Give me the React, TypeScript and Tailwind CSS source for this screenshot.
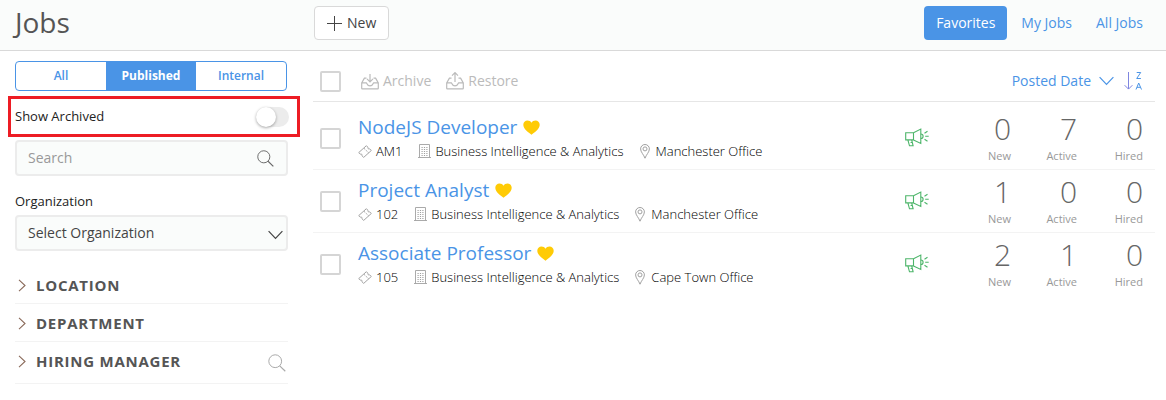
import React, { useState } from "react";

type Job = {
  title: string;
  code: string;
  department: string;
  office: string;
  stats: { label: string; value: number }[];
};

const makeStats = (fresh: number, active: number, hired: number) => [
  { label: "New", value: fresh },
  { label: "Active", value: active },
  { label: "Hired", value: hired },
];

const jobs: Job[] = [
  {
    title: "NodeJS Developer",
    code: "AM1",
    department: "Business Intelligence & Analytics",
    office: "Manchester Office",
    stats: makeStats(0, 7, 0),
  },
  {
    title: "Project Analyst",
    code: "102",
    department: "Business Intelligence & Analytics",
    office: "Manchester Office",
    stats: makeStats(1, 0, 0),
  },
  {
    title: "Associate Professor",
    code: "105",
    department: "Business Intelligence & Analytics",
    office: "Cape Town Office",
    stats: makeStats(2, 1, 0),
  },
];

type IconProps = { className?: string };

const PlusIcon = () => (
  <svg width="15" height="15" viewBox="0 0 15 15" fill="none" stroke="#444" aria-hidden="true">
    <path d="M0 7.5h15M7.5 0v15" />
  </svg>
);

const SearchIcon = ({ className }: IconProps) => (
  <svg viewBox="0 0 18 18" fill="none" stroke="currentColor" className={className} aria-hidden="true">
    <circle cx="7.2" cy="7.2" r="6.4" />
    <path d="M11.7 11.9l5.6 5.4" strokeWidth="1.2" />
  </svg>
);

const ChevronDown = ({ className }: IconProps) => (
  <svg width="15" height="10" viewBox="0 0 15 10" fill="none" stroke="currentColor" strokeWidth="1.2" className={className} aria-hidden="true">
    <path d="M.6 1.2l6.9 7.2 6.9-7.2" />
  </svg>
);

const ChevronRight = () => (
  <svg width="8" height="13" viewBox="0 0 8 13" fill="none" stroke="#8a6a5a" strokeWidth="1.1" aria-hidden="true">
    <path d="M1 .8l6 5.7-6 5.7" />
  </svg>
);

const Tray = () => (
  <path d="M5.5 6.2H3.4L.7 11v5.2c0 .4.3.7.7.7h15.200c.4 0 .7-.3.7-.7V11l-2.700-4.800h-2.100M.9 10.900h4.500c.5 0 .4 2.900 3.600 2.900s3.100-2.900 3.600-2.900h4.500" />
);

const ArchiveIcon = () => (
  <svg width="18" height="18" viewBox="0 0 18 18" fill="none" stroke="currentColor" strokeWidth="1.2" aria-hidden="true">
    <Tray />
    <path d="M9 2v7.500M6 6.800l3 3 3-3" />
  </svg>
);

const RestoreIcon = () => (
  <svg width="18" height="18" viewBox="0 0 18 18" fill="none" stroke="currentColor" strokeWidth="1.2" aria-hidden="true">
    <Tray />
    <path d="M9 10V.8M6 3.600l3-3 3 3" />
  </svg>
);

const SortIcon = () => (
  <svg width="18" height="20" viewBox="0 0 18 20" fill="none" stroke="currentColor" aria-hidden="true">
    <path d="M4.500 1v17M.6 14.200l3.900 3.900 3.900-3.900" stroke="#7f86e0" />
    <path d="M12.700 1.500h4l-4 6h4.200" />
    <path d="M12 18.500l2.700-6.500 2.800 6.500M13 16.300h3.500" />
  </svg>
);

const HeartIcon = () => (
  <svg width="17" height="15" viewBox="0 0 17 15" fill="#ffcb05" aria-hidden="true">
    <path d="M8.500 14.700C5.500 12.300.3 9 .3 4.700.3 2.200 2.200.4 4.500.4c1.700 0 3.200.9 4 2.300.8-1.400 2.300-2.300 4-2.300 2.300 0 4.200 1.800 4.200 4.300 0 4.300-5.200 7.600-8.200 10z" />
  </svg>
);

const TicketIcon = () => (
  <svg width="14" height="13" viewBox="0 0 14 13" fill="none" stroke="#999" strokeWidth=".9" aria-hidden="true">
    <path d="M8.400.7l1.500 1.500c-.6 1 .6 2.200 1.700 1.600l1.700 1.700-7.600 6.900-1.800-1.700c.6-1-.5-2.200-1.600-1.600L.7 7.600z" />
    <path d="M6 3.300l4.600 4.500" strokeDasharray="1.500 1" />
  </svg>
);

const BuildingIcon = () => (
  <svg width="13" height="14" viewBox="0 0 13 14" fill="none" stroke="#a0a0a0" aria-hidden="true">
    <path d="M1.500 13.500V.5h10v13M0 13.500h13" strokeWidth=".9" />
    <path d="M3.500 3.500h6M3.500 5.500h6M3.500 7.500h6M3.500 9.500h6M3.500 11.500h6" strokeDasharray="1.200 1.200" />
  </svg>
);

const PinIcon = () => (
  <svg width="10" height="15" viewBox="0 0 10 15" fill="none" stroke="#969696" strokeWidth=".9" aria-hidden="true">
    <path d="M5 14.200C3.800 10.800.6 8 .6 4.900a4.400 4.400 0 018.800 0c0 3.100-3.200 5.900-4.400 9.300z" />
    <circle cx="5" cy="4.900" r="2" />
  </svg>
);

const MegaphoneIcon = () => (
  <svg width="24" height="21" viewBox="0 0 24 21" fill="none" stroke="#4db56a" strokeWidth="1.100" aria-label="Published" role="img">
    <path d="M.7 4.700h7.800v7.200H.7zM8.500 4.700l7.300-3.600v14.300l-7.300-3.500M2.900 12l1.600 5.800h3.600L6.700 12M5.600 14.500h1.700" />
    <path d="M15.800 6c1.300 0 2.300.9 2.300 2.200s-1 2.300-2.300 2.300" />
    <path d="M19.500 5.300l3-2M20.200 8.300h3.500M19.500 11.300l3 2" />
  </svg>
);

const checkbox =
  "size-[21px] shrink-0 appearance-none rounded-xs border-2 border-[#d5d5d5] bg-white checked:bg-[#4a94e6]";

function Header() {
  return (
    <header className="grid grid-cols-[292px_1fr] gap-[14px] border-b border-[#d9d9d9] bg-[#fafcfb] pt-1.5 pr-[11px] pb-2.5 pl-2">
      <h1 className="pl-[7px] text-[28px] leading-8 text-[#555]">Jobs</h1>
      <div className="flex items-center justify-between">
        <button className="flex h-[34px] items-center gap-[5px] rounded border border-[#d9d9d9] bg-white px-3 text-sm text-[#444]">
          <PlusIcon />
          New
        </button>
        <nav className="flex items-center text-sm text-[#4a94e6]">
          <a href="#favorites" className="flex h-[34px] items-center rounded bg-[#4a94e6] px-3 text-white">
            Favorites
          </a>
          <a href="#my-jobs" className="px-3.5">My Jobs</a>
          <a href="#all-jobs" className="pr-3 pl-2.5">All Jobs</a>
        </nav>
      </div>
    </header>
  );
}

function Sidebar() {
  const [tab, setTab] = useState("Published");
  return (
    <aside className="pt-2.5">
      <div className="mr-[13px] ml-[7px] grid h-[30px] grid-cols-3 overflow-hidden rounded border border-[#4a94e6] text-xs font-semibold">
        {["All", "Published", "Internal"].map((name) => (
          <button
            key={name}
            onClick={() => setTab(name)}
            className={name === tab ? "bg-[#4a94e6] font-bold text-white" : "text-[#4a94e6]"}
          >
            {name}
          </button>
        ))}
      </div>

      <label className="mt-[5px] flex h-[41px] items-center justify-between border-3 border-[#ed1c24] pr-2 pl-1 text-[13px] font-medium text-[#222]">
        Show Archived
        <input
          type="checkbox"
          role="switch"
          className="flex h-5 w-[33px] appearance-none rounded-full bg-[#ececec] before:size-5 before:rounded-full before:bg-white before:shadow-[0_1px_3px_rgba(0,0,0,0.35)] checked:justify-end checked:bg-[#4a94e6]"
        />
      </label>

      <div className="mt-[3px] mr-3 ml-[7px]">
        <div className="flex h-9 items-center rounded border-2 border-[#ececec] bg-[#fafcfb] pr-3 pl-[11px]">
          <input
            type="text"
            aria-label="Search"
            placeholder="Search"
            className="min-w-0 flex-1 bg-transparent text-sm outline-none placeholder:text-[#999]"
          />
          <button aria-label="Search jobs" className="text-[#666]">
            <SearchIcon className="size-[17px]" />
          </button>
        </div>

        <label htmlFor="organization" className="mt-4 block text-[13px] leading-[18px] font-medium text-[#222]">
          Organization
        </label>
        <div className="mt-[5px] grid items-center">
          <select
            id="organization"
            className="col-start-1 row-start-1 h-9 w-full appearance-none rounded border-2 border-[#ececec] bg-[#fafcfb] pl-[11px] text-sm text-[#444]"
          >
            <option>Select Organization</option>
          </select>
          <ChevronDown className="pointer-events-none col-start-1 row-start-1 mt-1 mr-[5px] justify-self-end text-[#444]" />
        </div>

        <div className="mt-[15px] text-[15px] font-bold tracking-wider text-[#555]">
          {["LOCATION", "DEPARTMENT", "HIRING MANAGER"].map((name) => (
            <div key={name} className="flex items-start justify-between border-b border-[#f3f3f3] last:pb-1">
              <button className="flex h-[37px] items-center gap-2.5 pt-0.5 pl-[3px]">
                <ChevronRight />
                {name}
              </button>
              {name === "HIRING MANAGER" && (
                <button aria-label="Search hiring managers" className="flex h-[37px] items-center pt-1 pr-0.5 text-[#aaa]">
                  <SearchIcon className="size-[18px]" />
                </button>
              )}
            </div>
          ))}
        </div>
      </div>
    </aside>
  );
}

function Toolbar() {
  return (
    <div className="flex h-[51px] items-center border-b border-[#e6e6e6] pt-2.5 pr-[13px] pl-[7px] text-sm">
      <input type="checkbox" aria-label="Select all jobs" className={checkbox} />
      <div className="ml-5 flex gap-[15px] text-[#bbb]">
        <button className="flex items-center gap-1">
          <ArchiveIcon />
          Archive
        </button>
        <button className="flex items-center gap-1">
          <RestoreIcon />
          Restore
        </button>
      </div>
      <div className="ml-auto flex items-center gap-2.5 text-[#4a94e6]">
        <button className="flex items-center gap-2">
          Posted Date
          <ChevronDown />
        </button>
        <button aria-label="Sort descending">
          <SortIcon />
        </button>
      </div>
    </div>
  );
}

function JobRow({ job }: { job: Job }) {
  return (
    <li className="flex h-[63px] items-center border-b border-[#f3f3f3] pr-3 pl-[7px] last:border-transparent">
      <input type="checkbox" aria-label={`Select ${job.title}`} className={checkbox} />
      <div className="ml-[17px] flex-1">
        <h2 className="flex items-center gap-1.5 text-[19px] leading-[26px] text-[#4a94e6]">
          <a href="#job">{job.title}</a>
          <HeartIcon />
        </h2>
        <div className="flex gap-4 text-[13px] leading-[22px] font-light text-black">
          <span className="flex items-center gap-1">
            <TicketIcon />
            {job.code}
          </span>
          <span className="flex items-center gap-1">
            <BuildingIcon />
            {job.department}
          </span>
          <span className="flex items-center gap-1.5">
            <PinIcon />
            {job.office}
          </span>
        </div>
      </div>
      <MegaphoneIcon />
      <dl className="ml-4 flex">
        {job.stats.map((s) => (
          <div key={s.label} className="flex w-[66px] flex-col-reverse pb-px text-right">
            <dt className="text-[11px] leading-4 text-[#999]">{s.label}</dt>
            <dd className="pb-px text-[30px] leading-9 font-light text-[#666]">{s.value}</dd>
          </div>
        ))}
      </dl>
    </li>
  );
}

export default function App() {
  return (
    <div className="min-h-screen bg-white font-['Open_Sans',sans-serif]">
      <Header />
      <div className="grid grid-cols-[292px_1fr] gap-[13px] pr-[11px] pl-2">
        <Sidebar />
        <main>
          <Toolbar />
          <ul className="pt-[5px]">
            {jobs.map((job) => (
              <JobRow key={job.title} job={job} />
            ))}
          </ul>
        </main>
      </div>
    </div>
  );
}
